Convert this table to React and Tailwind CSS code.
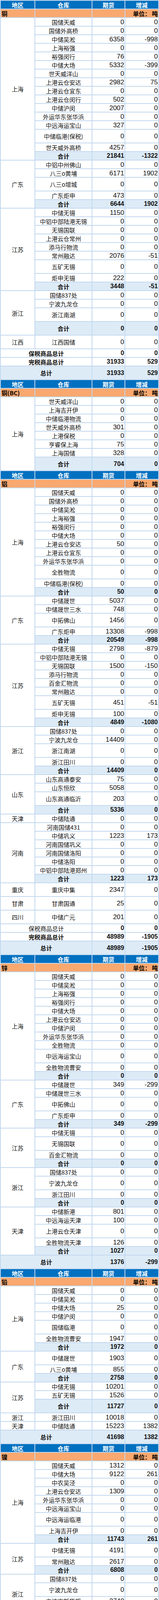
import React from 'react';

const CJK = "font-['Noto_Sans_CJK_SC',sans-serif]";
const NUM = "font-['Liberation_Sans_Narrow','Arial_Narrow','Liberation_Sans',sans-serif] text-[17px]";
const NUMB = "font-['Liberation_Sans',Arial,sans-serif] text-[16px] font-bold";

// row: [name, qty, change, tall]
const SECTIONS = [
  {
    name: '铜', col: '仓库',
    groups: [
      { r: '上海', sum: [21841, -1322], rows: [
        ['国储天威', 0, 0], ['国储外高桥', 0, 0], ['中储吴淞', 6358, -998], ['上海裕强', 0, 0],
        ['裕强闵行', 76, 0], ['中储大场', 5332, -399], ['世天威洋山', 0, 0], ['上港云仓安达', 2982, 75],
        ['上港云仓宜东', 0, 0], ['上港云仓闵行', 502, 0], ['中储沪闵', 2007, 0], ['外运华东张华浜', 0, 0],
        ['中远海运宝山', 327, 0], ['中储临港(保税)', 0, 0, 1], ['世天威外高桥', 4257, 0],
      ] },
      { r: '广东', sum: [6644, 1902], rows: [
        ['中铝中州佛山', 0, 0], ['八三o黄埔', 6171, 1902], ['八三o增城', 0, 0, 1], ['广东炬申', 473, 0],
      ] },
      { r: '江苏', sum: [3448, -51], rows: [
        ['中储无锡', 1150, 0], ['中铝中部陆港无锡', 0, 0], ['无锡国联', 0, 0], ['上港云仓常州', 0, 0],
        ['添马行物流', 0, 0], ['常州融达', 2076, -51], ['五矿无锡', 0, 0, 1], ['炬申无锡', 222, 0],
      ] },
      { r: '浙江', sum: [0, 0, 1], rows: [
        ['国储837处', 0, 0], ['宁波九龙仓', 0, 0], ['浙江南湖', 0, 0, 1],
      ] },
      { r: '江西', rows: [['江西国储', 0, 0, 1]] },
    ],
    foot: [
      { label: '保税商品总计', q: 0, c: 0, bold: true },
      { label: '完税商品总计', q: 31933, c: 529, bold: true },
      { label: '总计', q: 31933, c: 529, bold: true, blue: true, tall: true },
    ],
  },
  {
    name: '铜(BC)', col: '仓库',
    groups: [
      { r: '上海', sum: [704, 0, 1], rows: [
        ['世天威洋山', 0, 0], ['上海吉开伊', 0, 0], ['中储临港物流', 0, 0], ['世天威外高桥', 301, 0],
        ['上港保税', 0, 0], ['亨睿保上海', 75, 0], ['上海国储', 328, 0],
      ] },
    ],
    foot: [],
  },
  {
    name: '铝', col: '仓库',
    groups: [
      { r: '上海', sum: [50, 0], rows: [
        ['国储天威', 0, 0], ['国储外高桥', 0, 0], ['中储吴淞', 0, 0], ['上海裕强', 0, 0],
        ['裕强闵行', 0, 0], ['中储大场', 0, 0], ['上港云仓安达', 50, 0], ['上港云仓宜东', 0, 0],
        ['外运华东张华浜', 0, 0], ['全胜物流', 0, 0, 1], ['中储临港(保税)', 0, 0],
      ] },
      { r: '广东', sum: [20549, -998], rows: [
        ['中储晟世', 5037, 0], ['中储晟世三水', 748, 0], ['中拓佛山', 1456, 0, 1], ['广东炬申', 13308, -998],
      ] },
      { r: '江苏', sum: [4849, -1080], rows: [
        ['中储无锡', 2798, -879], ['中铝中部陆港无锡', 0, 0], ['无锡国联', 1500, -150], ['添马行物流', 0, 0],
        ['百金汇物流', 0, 0], ['常州融达', 0, 0], ['五矿无锡', 451, -51, 1], ['炬申无锡', 100, 0],
      ] },
      { r: '浙江', sum: [14409, 0], rows: [
        ['国储837处', 0, 0], ['宁波九龙仓', 14409, 0], ['浙江南湖', 0, 0, 1], ['浙江田川', 0, 0],
      ] },
      { r: '山东', sum: [5336, 0], rows: [
        ['山东高通泰安', 75, 0], ['山东恒欣', 5058, 0], ['山东高通临沂', 203, 0, 1],
      ] },
      { r: '天津', rows: [['中储陆通', 0, 0]] },
      { r: '河南', sum: [1223, 173], rows: [
        ['河南国储431', 0, 0], ['中储巩义', 1223, 173], ['河南国储巩义', 0, 0], ['河南国储洛阳', 0, 0],
        ['中储洛阳', 0, 0], ['中铝中部陆港郑州', 0, 0],
      ] },
      { r: '重庆', rows: [['重庆中集', 2347, 0, 1]] },
      { r: '甘肃', rows: [['甘肃国通', 25, 0, 1]] },
      { r: '四川', rows: [['中储广元', 201, 0, 1]] },
    ],
    foot: [
      { label: '保税商品总计', q: 0, c: 0 },
      { label: '完税商品总计', q: 48989, c: -1905, bold: true },
      { label: '总计', q: 48989, c: -1905, bold: true, blue: true, tall: true },
    ],
  },
  {
    name: '锌', col: '仓库',
    groups: [
      { r: '上海', sum: [0, 0], rows: [
        ['国储天威', 0, 0], ['中储吴淞', 0, 0], ['上海裕强', 0, 0], ['裕强闵行', 0, 0],
        ['中储大场', 0, 0], ['上港云仓安达', 0, 0], ['中储沪闵', 0, 0], ['外运华东张华浜', 0, 0],
        ['全胜物流', 0, 0], ['中远海运宝山', 0, 0, 1], ['全胜物流曹安', 0, 0],
      ] },
      { r: '广东', sum: [349, -299], rows: [
        ['中储晟世', 349, -299], ['中储晟世三水', 0, 0], ['中拓佛山', 0, 0, 1], ['广东炬申', 0, 0],
      ] },
      { r: '江苏', sum: [0, 0], rows: [
        ['中储无锡', 0, 0], ['无锡国联', 0, 0, 1], ['百金汇物流', 0, 0],
      ] },
      { r: '浙江', sum: [0, 0], rows: [
        ['国储837处', 0, 0], ['宁波九龙仓', 0, 0, 1], ['浙江田川', 0, 0],
      ] },
      { r: '天津', sum: [1027, 0], rows: [
        ['中储新港', 801, 0], ['中远海运天津', 100, 0], ['上港云仓天津', 0, 0, 1], ['全胜物流天津', 126, 0],
      ] },
    ],
    foot: [{ label: '总计', q: 1376, c: -299, bold: true, blue: true, tall: true }],
  },
  {
    name: '铅', col: '仓库',
    groups: [
      { r: '上海', sum: [1972, 0], rows: [
        ['国储天威', 0, 0], ['中储吴淞', 0, 0], ['中储大场', 25, 0], ['中储沪闵', 0, 0],
        ['国储临港', 0, 0, 1], ['全胜物流曹安', 1947, 0],
      ] },
      { r: '广东', sum: [2758, 0], rows: [['中储晟世', 1903, 0, 1], ['八三o黄埔', 855, 0]] },
      { r: '江苏', sum: [11727, 0, 1], rows: [['中储无锡', 10201, 0], ['五矿无锡', 1526, 0]] },
      { r: '浙江', rows: [['浙江田川', 10018, 0]] },
      { r: '天津', rows: [['中储陆通', 15223, 1382]] },
    ],
    foot: [{ label: '总计', q: 41698, c: 1382, bold: true, blue: true, tall: true }],
  },
  {
    name: '镍', col: '仓库',
    groups: [
      { r: '上海', sum: [11743, 261], rows: [
        ['国储天威', 1312, 0], ['中储大场', 9122, 261], ['中农吴泾', 0, 0], ['上港云仓安达', 1309, 0],
        ['外运华东张华浜', 0, 0], ['中远海运宝山', 0, 0], ['中远海运临港', 0, 0, 1], ['上海吉开伊', 0, 0],
      ] },
      { r: '江苏', sum: [6808, 0], rows: [['中储无锡', 4191, 0, 1], ['常州融达', 2617, 0]] },
      { r: '浙江', sum: [3748, 0], rows: [
        ['国储837处', 0, 0], ['宁波九龙仓', 0, 0, 1], ['宁波高新货柜', 3748, 0],
      ] },
    ],
    foot: [{ label: '总计', q: 22299, c: 261, bold: true, blue: true, tall: true }],
  },
  {
    name: '锡', col: '仓库',
    groups: [
      { r: '上海', sum: [1647, -122], rows: [
        ['国储天威', 752, -84], ['中储大场', 803, -38], ['外运华东张华浜', 0, 0, 1], ['全胜物流曹安', 92, 0],
      ] },
      { r: '广东', sum: [4534, -164], rows: [['八三o黄埔', 1855, -88, 1], ['广东炬申', 2679, -76]] },
      { r: '江苏', sum: [1047, -6], rows: [
        ['中储无锡', 1031, -6], ['五矿无锡', 16, 0, 1], ['玫隆物流', 0, 0],
      ] },
    ],
    foot: [{ label: '总计', q: 7228, c: -292, bold: true, blue: true, tall: true }],
  },
  {
    name: '氧化铝仓库', col: '仓库',
    groups: [
      { r: '山东', sum: [601, 0], rows: [
        ['山港青岛国际物流', 0, 0], ['外运华中黄岛', 601, 0], ['外运华中胶州', 0, 0], ['外运华中市北', 0, 0],
        ['山港青岛港', 0, 0, 1], ['象屿速传青岛', 0, 0],
      ] },
      { r: '河南', sum: [300, 0, 1], rows: [
        ['中铝物流郑州', 0, 0], ['中储洛阳', 0, 0], ['中铝中部陆港郑州', 300, 0],
      ] },
      { r: '广西', rows: [['炬申钦州', 3001, 0]] },
      { r: '甘肃', rows: [['甘肃国通', 0, 0]] },
      { r: '新疆', sum: [98488, -9597], rows: [
        ['新疆诚通', 30343, -902], ['炬申新疆', 45658, -905, 1], ['中疆物流', 22487, -7790],
      ] },
    ],
    foot: [{ label: '总计', q: 102390, c: -9597, bold: true, blue: true, tall: true }],
  },
  {
    name: '氧化铝厂库', col: '厂库',
    groups: [
      { r: '山东', sum: [0, -1200], rows: [['中铝山东', 0, -1200], ['山东宏拓', 0, 0, 1]] },
      { r: '河南', rows: [['中州铝业', 300, 0]] },
    ],
    foot: [{ label: '总计', q: 300, c: -1200, bold: true, blue: true }],
  },
];

function Head({ col }) {
  const c = `h-[20px] shrink-0 bg-[#0070c0] flex items-center justify-center text-white text-[15px] font-bold ${CJK}`;
  return (
    <div className="flex gap-[2px]">
      <div className={`${c} w-[86px]`}>地区</div>
      <div className={`${c} w-[144px]`}>{col}</div>
      <div className={`${c} w-[82px]`}>期货</div>
      <div className={`${c} w-[84px]`}>增减</div>
    </div>
  );
}

function Band({ name }) {
  const c = `h-[20px] shrink-0 bg-[#f9a86f] flex items-center text-[15px] font-bold text-black ${CJK}`;
  return (
    <div className="flex gap-[2px]">
      <div className={`${c} w-[86px] pl-[2px] whitespace-nowrap`}>{name}</div>
      <div className={`${c} w-[144px]`} />
      <div className={`${c} w-[82px]`} />
      <div className={`${c} w-[84px] justify-end pr-[1px] whitespace-pre`}>单位： 吨</div>
    </div>
  );
}

function Row({ row }) {
  const [name, q, c, tall] = row;
  const h = tall ? 'h-[33px]' : 'h-[20px]';
  return (
    <div className="flex gap-[2px]">
      <div className={`${h} w-[144px] shrink-0 bg-white flex items-center justify-center text-[15px] whitespace-nowrap ${CJK}`}>{name}</div>
      <div className={`${h} w-[82px] shrink-0 bg-white flex items-center justify-end pr-[1px] ${NUM}`}>{q}</div>
      <div className={`${h} w-[84px] shrink-0 bg-white flex items-center justify-end pr-[1px] ${NUM}`}>{c}</div>
    </div>
  );
}

function Sum({ sum }) {
  const [q, c, tall] = sum;
  const h = tall ? 'h-[33px]' : 'h-[20px]';
  return (
    <div className="flex gap-[2px]">
      <div className={`${h} w-[144px] shrink-0 bg-[#ddebf7] flex items-center justify-center text-[15px] font-bold ${CJK}`}>合计</div>
      <div className={`${h} w-[82px] shrink-0 bg-[#ddebf7] flex items-center justify-end pr-[1px] ${NUMB}`}>{q}</div>
      <div className={`${h} w-[84px] shrink-0 bg-[#ddebf7] flex items-center justify-end pr-[1px] ${NUMB}`}>{c}</div>
    </div>
  );
}

function Group({ g }) {
  return (
    <div className="flex gap-[2px]">
      <div className={`w-[86px] shrink-0 bg-white flex items-center justify-center text-[15px] ${CJK}`}>{g.r}</div>
      <div className="flex flex-col gap-[2px]">
        {g.rows.map((row, i) => (
          <Row key={i} row={row} />
        ))}
        {g.sum && <Sum sum={g.sum} />}
      </div>
    </div>
  );
}

function Foot({ f }) {
  const h = f.tall ? 'h-[33px]' : 'h-[20px]';
  const bg = f.blue ? 'bg-[#ddebf7]' : 'bg-white';
  return (
    <div className="flex gap-[2px]">
      <div className={`${h} ${bg} w-[232px] shrink-0 flex items-center justify-center text-[15px] ${f.bold ? 'font-bold' : 'font-normal'} ${CJK}`}>
        {f.label}
      </div>
      <div className={`${h} ${bg} w-[82px] shrink-0 flex items-center justify-end pr-[1px] ${NUMB}`}>{f.q}</div>
      <div className={`${h} ${bg} w-[84px] shrink-0 flex items-center justify-end pr-[1px] ${NUMB}`}>{f.c}</div>
    </div>
  );
}

export default function App() {
  return (
    <div className="bg-white">
      <div className="w-[406px] flex flex-col gap-[2px] p-[2px] bg-[#c3d8ee] leading-none text-[#111]">
        {SECTIONS.map((s, si) => (
          <React.Fragment key={si}>
            <Head col={s.col} />
            <Band name={s.name} />
            {s.groups.map((g, gi) => (
              <Group key={gi} g={g} />
            ))}
            {s.foot.map((f, fi) => (
              <Foot key={fi} f={f} />
            ))}
          </React.Fragment>
        ))}
      </div>
    </div>
  );
}
